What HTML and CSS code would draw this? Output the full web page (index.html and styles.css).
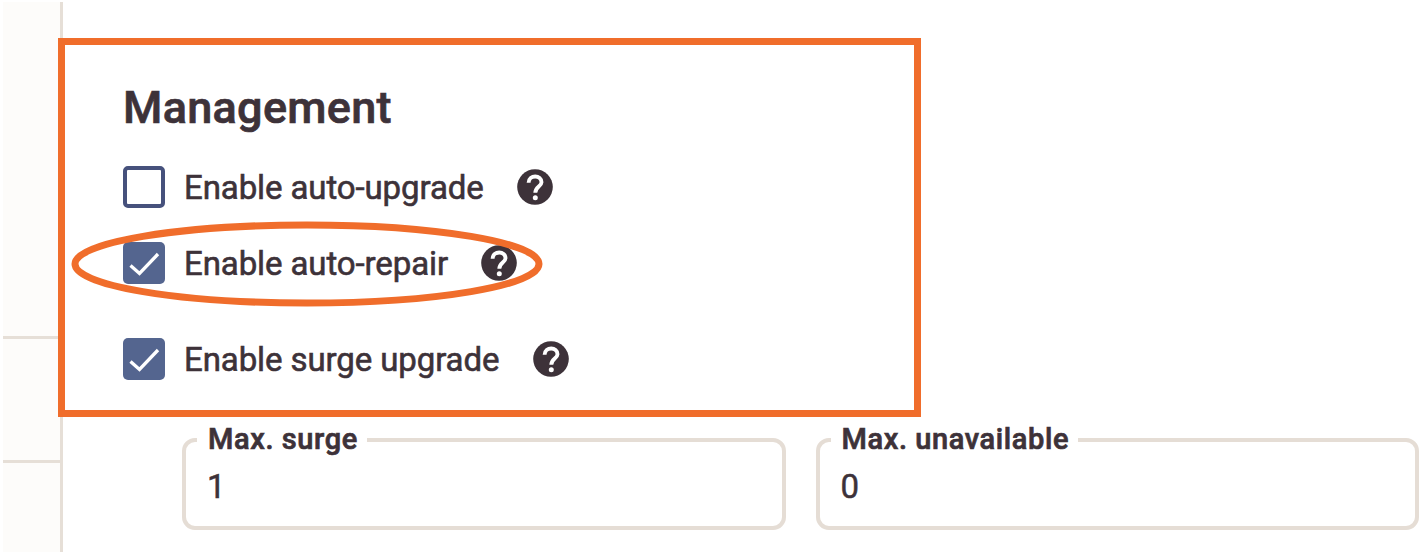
FILE: index.html
```html
<!DOCTYPE html>
<html lang="en">
<head>
<meta charset="utf-8">
<title>Node pool management</title>
<link rel="stylesheet" href="styles.css">
</head>
<body>
<svg class="defs" aria-hidden="true">
  <symbol id="help" viewBox="0 0 36 36"><circle cx="18" cy="18" r="17.800" fill="#3d3239"/><path d="M11.600 13.800C11.800 5.300 24.700 5.700 24.500 13.300C24.400 17.800 18.300 17.600 18.300 23.800" fill="none" stroke="#fff" stroke-width="3.900"/><circle cx="18.300" cy="28.800" r="2.500" fill="#fff"/></symbol>
  <symbol id="check" viewBox="0 0 42 42"><path d="M7.500 23.500L16.500 31.500L35 12" fill="none" stroke="#fff" stroke-width="3.300"/></symbol>
</svg>
<div class="page">
  <aside class="side">
    <div class="side-cell first"></div>
    <div class="side-cell second"></div>
    <div class="side-cell"></div>
  </aside>
  <main class="main">
    <section class="management">
      <h2 class="title"><span>Management</span></h2>
      <div class="option">
        <span class="box"></span><span class="name upgrade">Enable auto-upgrade</span><svg class="help"><use href="#help"/></svg>
      </div>
      <div class="option repair-row">
        <span class="box checked"><svg><use href="#check"/></svg></span><span class="name repair">Enable auto-repair</span><svg class="help"><use href="#help"/></svg>
        <svg class="ring" viewBox="0 0 472 86"><ellipse cx="236" cy="43" rx="232" ry="39"/></svg>
      </div>
      <div class="option surge-row">
        <span class="box checked"><svg><use href="#check"/></svg></span><span class="name surge">Enable surge upgrade</span><svg class="help"><use href="#help"/></svg>
      </div>
    </section>
    <div class="fields">
      <fieldset class="field"><legend class="label">Max. surge</legend><div class="value">1</div></fieldset>
      <fieldset class="field"><legend class="label">Max. unavailable</legend><div class="value">0</div></fieldset>
    </div>
  </main>
</div>
</body>
</html>
```

FILE: styles.css
```css
* { box-sizing: border-box; }
body { margin: 0; background: #fff; color: #3d3239; font-family: Roboto, "Liberation Sans", sans-serif; overflow: hidden; }
.defs { position: absolute; width: 0; height: 0; }
.page { display: flex; width: 1425px; height: 557px; padding: 2px 0 5px 3px; }
.side { width: 60px; flex: none; display: flex; flex-direction: column; background: #fdfcfa; border-right: 3px solid #e6dfd7; }
.side-cell { flex: 1; }
.side-cell.first { flex: none; height: 337px; border-bottom: 3px solid #e6dfd7; }
.side-cell.second { flex: none; height: 124px; border-bottom: 3px solid #e6dfd7; }
.main { flex: 1; padding-top: 36px; }
.management { position: relative; width: 863px; height: 379px; margin-left: -5px; border: 7px solid #f06d2b; background: #fff; padding: 40px 0 0 58px; display: flex; flex-direction: column; }
.title { margin: 0; height: 44px; line-height: 46px; font-size: 45px; font-weight: 500; white-space: nowrap; letter-spacing: 0.3px; -webkit-text-stroke: 0.7px #3d3239; }
.option { display: flex; align-items: center; height: 42px; margin-top: 37px; position: relative; }
.option.repair-row { margin-top: 34px; }
.option.surge-row { margin-top: 54px; }
.box { width: 42px; height: 42px; border: 4px solid #46517c; border-radius: 5px; flex: none; }
.box.checked { background: #54658f; border: 0; }
.box svg { display: block; width: 42px; height: 42px; }
.name { margin-left: 19px; padding-top: 2px; font-size: 33px; line-height: 42px; letter-spacing: -0.1px; white-space: nowrap; -webkit-text-stroke: 0.6px #3d3239; }
.upgrade { width: 333px; }
.repair { width: 297px; }
.surge { width: 349px; }
.help { width: 36px; height: 36px; flex: none; }
.ring { position: absolute; left: -52px; top: -21.5px; width: 472px; height: 86px; }
.ring ellipse { fill: none; stroke: #f06d2b; stroke-width: 7; }
.fields { display: flex; gap: 30px; padding: 7px 0 0 119px; }
.field { width: 603.5px; height: 106px; margin: 0; min-width: 0; padding: 0 11px; border: 4px solid #e5ddd5; border-radius: 13px; flex: none; }
.label { height: 32px; line-height: 30px; padding: 0 9px 0 11px; font-size: 29px; font-weight: 500; letter-spacing: 0.6px; white-space: nowrap; -webkit-text-stroke: 0.7px #3d3239; }
.value { padding: 10px 0 0 10px; font-size: 33px; line-height: 42px; -webkit-text-stroke: 0.5px #3d3239; }
```
